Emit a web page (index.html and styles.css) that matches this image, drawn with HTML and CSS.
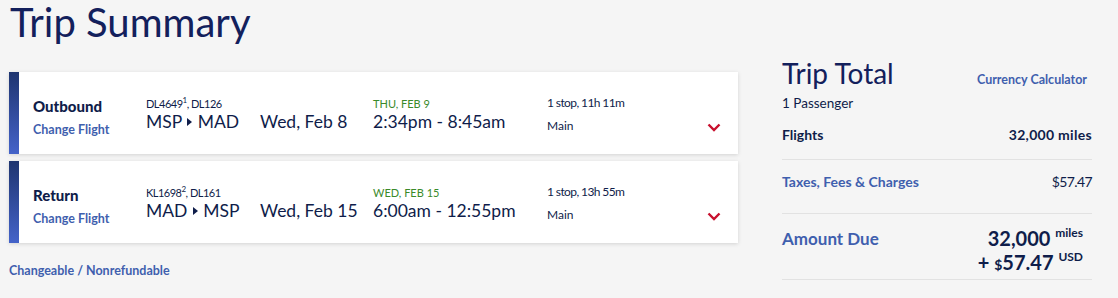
FILE: index.html
```html
<!DOCTYPE html>
<html>
<head>
<meta charset="utf-8">
<link rel="stylesheet" href="styles.css">
</head>
<body>
<div class="page">
  <div class="left">
    <h1 class="title">Trip Summary</h1>
    <div class="card">
      <div class="bar"></div>
      <div class="card-body">
        <div class="col-label">
          <div class="dir">Outbound</div>
          <a class="link">Change Flight</a>
        </div>
        <div class="col-route">
          <div class="small code">DL4649<sup>1</sup>, DL126</div>
          <div class="big">MSP <span class="tri"></span> MAD</div>
        </div>
        <div class="col-date">
          <div class="small">&nbsp;</div>
          <div class="big">Wed, Feb 8</div>
        </div>
        <div class="col-time">
          <div class="small green">THU, FEB 9</div>
          <div class="big">2:34pm - 8:45am</div>
        </div>
        <div class="col-stop">
          <div class="stop">1 stop, 11h 11m</div>
          <div class="cabin">Main</div>
        </div>
        <div class="col-chev">
          <svg width="14" height="9" viewBox="0 0 14 9"><path d="M1.5 1.5 L7 7 L12.5 1.5" fill="none" stroke="#c8102e" stroke-width="2.4"/></svg>
        </div>
      </div>
    </div>
    <div class="card">
      <div class="bar"></div>
      <div class="card-body">
        <div class="col-label">
          <div class="dir">Return</div>
          <a class="link">Change Flight</a>
        </div>
        <div class="col-route">
          <div class="small code">KL1698<sup>2</sup>, DL161</div>
          <div class="big">MAD <span class="tri"></span> MSP</div>
        </div>
        <div class="col-date">
          <div class="small">&nbsp;</div>
          <div class="big">Wed, Feb 15</div>
        </div>
        <div class="col-time">
          <div class="small green">WED, FEB 15</div>
          <div class="big">6:00am - 12:55pm</div>
        </div>
        <div class="col-stop">
          <div class="stop">1 stop, 13h 55m</div>
          <div class="cabin">Main</div>
        </div>
        <div class="col-chev">
          <svg width="14" height="9" viewBox="0 0 14 9"><path d="M1.5 1.5 L7 7 L12.5 1.5" fill="none" stroke="#c8102e" stroke-width="2.4"/></svg>
        </div>
      </div>
    </div>
    <a class="link foot">Changeable / Nonrefundable</a>
  </div>
  <div class="right">
    <div class="total-head">
      <h2 class="total-title">Trip Total</h2>
      <a class="link calc">Currency Calculator</a>
    </div>
    <div class="pax">1 Passenger</div>
    <div class="row flights">
      <span class="b">Flights</span>
      <span class="b miles">32,000 miles</span>
    </div>
    <div class="row taxes">
      <a class="link tl">Taxes, Fees &amp; Charges</a>
      <span class="amt">$57.47</span>
    </div>
    <div class="row due">
      <a class="link due-label">Amount Due</a>
      <div class="due-amt">
        <div class="due-line">32,000 <sup>miles</sup></div>
        <div class="due-line">+ <span class="dollar">$</span>57.47 <sup>USD</sup></div>
      </div>
    </div>
  </div>
</div>
</body>
</html>
```
FILE: styles.css
```css
* { box-sizing: border-box; }
html, body { margin: 0; padding: 0; }
body {
  background: #f5f5f5;
  font-family: Lato, "Open Sans", sans-serif;
  color: #0f1d4a;
  width: 1118px;
  height: 298px;
  overflow: hidden;
}
.page {
  display: flex;
  padding: 0 0 0 9px;
}
.left { width: 729px; }
.title {
  margin: 0;
  font-weight: 400;
  font-size: 40px;
  line-height: 44px;
  padding-left: 1px;
  color: #13205c;
  height: 72px;
}
.card {
  display: flex;
  height: 82px;
  background: #fff;
  box-shadow: 0 1px 4px rgba(0,0,0,0.14);
  margin-bottom: 7px;
}
.bar {
  width: 10px;
  background: linear-gradient(#1f3570, #4463c9);
}
.card-body {
  flex: 1;
  display: flex;
  align-items: flex-start;
  padding-top: 25px;
}
.col-label { width: 127px; padding-left: 14px; padding-top: 0; }
.dir { font-weight: 900; font-size: 15px; line-height: 18px; color: #0f1d4a; }
.link { color: #3f5fae; font-weight: 700; text-decoration: none; display: block; }
.col-label .link { font-size: 12.5px; margin-top: 7px; line-height: 16px; }
.col-route { width: 114px; }
.col-date { width: 113px; }
.col-time { width: 174px; }
.small { font-size: 11px; line-height: 14px; color: #0f1d4a; }
.code { letter-spacing: -0.5px; }
.small sup { font-size: 8px; vertical-align: top; line-height: 8px; position: relative; top: -1px; }
.green { color: #3a8a2a; }
.big { font-size: 17.5px; line-height: 22px; color: #0f1d4a; }
.tri {
  display: inline-block;
  width: 0; height: 0;
  border-top: 4px solid transparent;
  border-bottom: 4px solid transparent;
  border-left: 5px solid #0f1d4a;
  vertical-align: 2px;
  margin: 0 1px;
}
.col-stop { width: 160px; font-size: 12px; color: #0f1d4a; }
.stop { line-height: 16px; margin-top: -2px; letter-spacing: -0.6px; }
.cabin { line-height: 16px; margin-top: 7px; }
.col-chev { padding-top: 26px; }
.col-chev svg { display: block; }
.foot { font-size: 12.5px; margin-top: 20px; }

.right { width: 310px; margin-left: 44px; }
.total-head {
  display: flex;
  justify-content: space-between;
  align-items: baseline;
  padding-top: 56px;
  padding-right: 5px;
}
.total-title {
  margin: 0;
  font-weight: 400;
  font-size: 28px;
  line-height: 34px;
  color: #13205c;
}
.calc { font-size: 12.5px; }
.pax { font-size: 13.5px; line-height: 18px; margin-top: 4px; }
.row {
  display: flex;
  justify-content: space-between;
  font-size: 14px;
  border-bottom: 1px solid #e2e2e2;
}
.b { font-weight: 700; }
.miles { letter-spacing: 0.3px; }
.amt { letter-spacing: -0.6px; }
.flights { padding-top: 14px; padding-bottom: 15px; line-height: 18px; }
.taxes { padding-top: 13px; padding-bottom: 22px; line-height: 18px; }
.taxes .tl { font-size: 14px; }
.due { padding-top: 12px; padding-bottom: 5px; align-items: flex-start; }
.due-label { font-size: 17px; line-height: 22px; font-weight: 700; margin-top: 2px; }
.due-amt { text-align: right; font-weight: 700; font-size: 20px; padding-right: 9px; }
.due-line { line-height: 24px; height: 24px; }
.due-amt sup { font-size: 12px; vertical-align: top; line-height: 12px; position: relative; top: 1px; }
.dollar { font-size: 14px; }
```
